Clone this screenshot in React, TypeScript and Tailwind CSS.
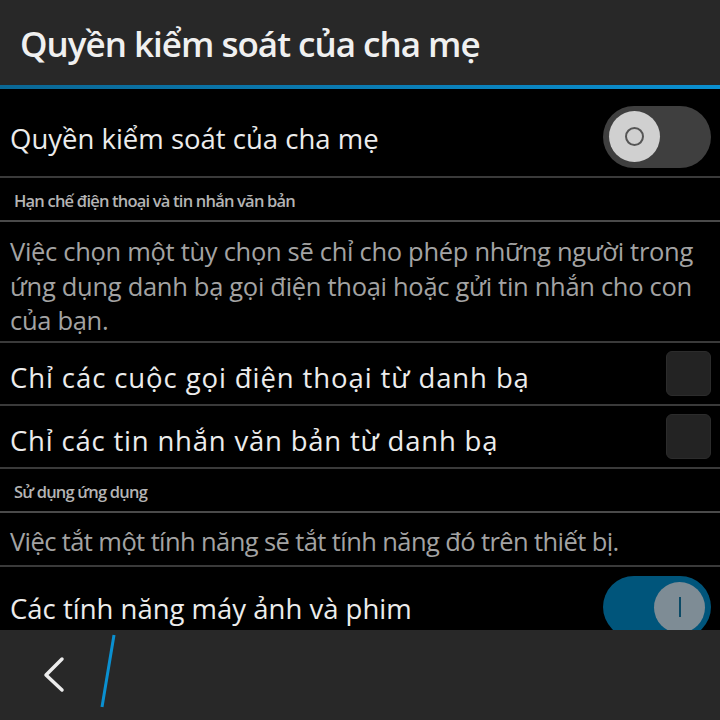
const font = "font-['Open_Sans','Noto_Sans',sans-serif]";

function Toggle({ on }: { on: boolean }) {
  if (on) {
    return (
      <div className="flex h-[62px] w-[108px] shrink-0 items-center justify-end rounded-full bg-[#00557b] pr-[6px]">
        <div className="flex h-[51px] w-[51px] items-center justify-center rounded-full bg-[#7e8c95]">
          <div className="h-[20px] w-[2px] bg-[#0b4a66]" />
        </div>
      </div>
    );
  }
  return (
    <div className="flex h-[62px] w-[108px] shrink-0 items-center rounded-full bg-[#3f3f3f] pl-[6px]">
      <div className="flex h-[51px] w-[51px] items-center justify-center rounded-full bg-[#d0d0d0]">
        <div className="h-[19px] w-[19px] rounded-full border-2 border-[#555555]" />
      </div>
    </div>
  );
}

function Checkbox() {
  return (
    <div className="h-[45px] w-[45px] shrink-0 rounded-[6px] border border-[#2c2c2c] bg-[#232323]" />
  );
}

function SectionHeader({ label }: { label: string }) {
  return (
    <div className="flex h-[44px] shrink-0 items-center border-b-2 border-[#4a4a4a] pl-[14px] pt-1 text-[16.5px] font-semibold tracking-[-0.8px] text-[#b4b4b4]">
      {label}
    </div>
  );
}

export default function App() {
  return (
    <div
      className={`flex h-[720px] w-[720px] flex-col overflow-hidden bg-black ${font}`}
    >
      <header className="flex h-[85px] shrink-0 items-center bg-[#282828] pl-5 pt-1 text-[35px] font-semibold tracking-[-1px] text-[#f0f0f0]">
        Quyền kiểm soát của cha mẹ
      </header>
      <div className="h-1 shrink-0 bg-gradient-to-r from-[#0a6896] to-[#0a90d1]" />

      <main className="flex min-h-0 flex-1 flex-col overflow-hidden">
        <div className="flex h-[89px] shrink-0 items-center justify-between border-b-2 border-[#3a3a3a] pl-[10px] pr-[9px] pt-2">
          <span className="pt-1 text-[27.5px] text-[#ececec]">
            Quyền kiểm soát của cha mẹ
          </span>
          <Toggle on={false} />
        </div>

        <SectionHeader label="Hạn chế điện thoại và tin nhắn văn bản" />

        <div className="h-[121px] shrink-0 border-b-2 border-[#3a3a3a] px-[10px] pt-[12px] text-[25.5px] leading-[34.5px] tracking-[-0.3px] text-[#a3a3a3]">
          Việc chọn một tùy chọn sẽ chỉ cho phép những người trong ứng dụng
          danh bạ gọi điện thoại hoặc gửi tin nhắn cho con của bạn.
        </div>

        <div className="flex h-[63px] shrink-0 items-center justify-between border-b-2 border-[#3a3a3a] pl-[10px] pr-[9px]">
          <span className="pt-2 text-[27.5px] tracking-[0.9px] text-[#ececec]">
            Chỉ các cuộc gọi điện thoại từ danh bạ
          </span>
          <Checkbox />
        </div>

        <div className="flex h-[63px] shrink-0 items-center justify-between border-b-2 border-[#3a3a3a] pl-[10px] pr-[9px]">
          <span className="pt-2 text-[27.5px] tracking-[0.8px] text-[#ececec]">
            Chỉ các tin nhắn văn bản từ danh bạ
          </span>
          <Checkbox />
        </div>

        <SectionHeader label="Sử dụng ứng dụng" />

        <div className="h-[54px] shrink-0 border-b-2 border-[#3a3a3a] px-[10px] pt-[11px] text-[25.5px] leading-[34.5px] tracking-[-0.6px] text-[#a3a3a3]">
          Việc tắt một tính năng sẽ tắt tính năng đó trên thiết bị.
        </div>

        <div className="flex h-[88px] shrink-0 items-start justify-between pl-[10px] pr-[9px] pt-[9px]">
          <span className="pt-[12px] text-[27.5px] text-[#ececec]">
            Các tính năng máy ảnh và phim
          </span>
          <Toggle on={true} />
        </div>
      </main>

      <footer className="flex h-[90px] shrink-0 items-center bg-[#282828]">
        <svg width="720" height="90" viewBox="0 0 720 90">
          <polyline
            points="62,29 46,45 62,60"
            fill="none"
            stroke="#ececec"
            strokeWidth="3.5"
            strokeLinecap="round"
            strokeLinejoin="round"
          />
          <line
            x1="114"
            y1="5"
            x2="102"
            y2="77"
            stroke="#0a90d1"
            strokeWidth="3"
          />
        </svg>
      </footer>
    </div>
  );
}
